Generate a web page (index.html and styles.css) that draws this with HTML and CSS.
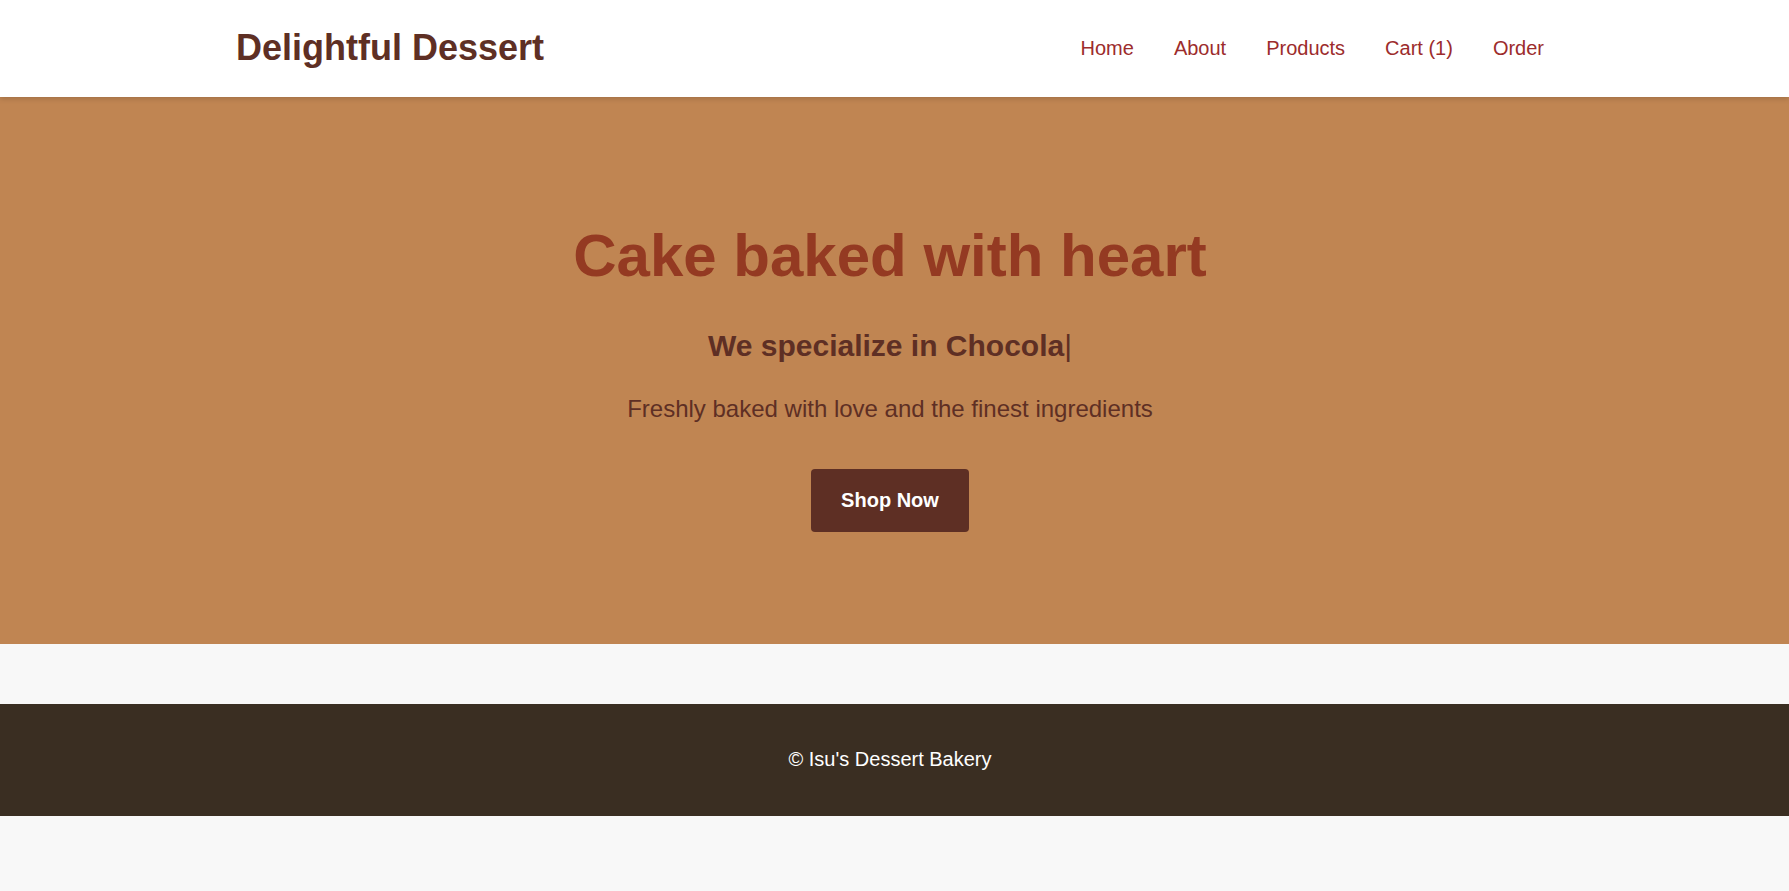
FILE: index.html
```html
<!DOCTYPE html>
<html lang="en">
<head>
<meta charset="utf-8">
<title>Delightful Dessert</title>
<link rel="stylesheet" href="styles.css">
</head>
<body>
<header class="site-header">
  <div class="header-inner">
    <h1 class="logo">Delightful Dessert</h1>
    <nav class="nav">
      <a href="#" class="nav-link">Home</a>
      <a href="#" class="nav-link">About</a>
      <a href="#" class="nav-link">Products</a>
      <a href="#" class="nav-link">Cart (1)</a>
      <a href="#" class="nav-link">Order</a>
    </nav>
  </div>
</header>
<section class="hero">
  <h2 class="hero-title">Cake baked with heart</h2>
  <h3 class="hero-sub">We specialize in Chocola<span class="cursor">|</span></h3>
  <p class="hero-text">Freshly baked with love and the finest ingredients</p>
  <a href="#" class="btn">Shop Now</a>
</section>
<footer class="site-footer">
  <p class="footer-text">© Isu's Dessert Bakery</p>
</footer>
</body>
</html>
```
FILE: styles.css
```css
* { box-sizing: border-box; }
html, body { margin: 0; padding: 0; }
body {
  font-family: "Liberation Sans", Arial, sans-serif;
  background: #f8f8f8;
  color: #333;
}
.site-header {
  background: #ffffff;
  box-shadow: 0 2px 5px rgba(0, 0, 0, 0.15);
  position: relative;
  z-index: 2;
  padding-right: 9px;
}
.header-inner {
  max-width: 1308px;
  margin: 0 auto;
  height: 97px;
  display: flex;
  align-items: center;
  justify-content: space-between;
}
.logo {
  margin: 0;
  padding-top: 1px;
  padding-bottom: 3px;
  font-size: 36px;
  font-weight: 700;
  color: #5e2f24;
}
.nav {
  display: flex;
  gap: 40px;
}
.nav-link {
  font-size: 20px;
  color: #9c2c2c;
  text-decoration: none;
}
.hero {
  background: #c08552;
  display: flex;
  flex-direction: column;
  align-items: center;
  text-align: center;
  padding: 124px 29px 112px 20px;
}
.hero-title {
  margin: 0 0 39px;
  font-size: 60px;
  font-weight: 700;
  color: #943a22;
}
.hero-sub {
  margin: 0 0 32px;
  font-size: 30px;
  font-weight: 700;
  color: #5e2f24;
}
.cursor {
  font-weight: 400;
}
.hero-text {
  margin: 0 0 46px;
  font-size: 24px;
  color: #5e2f24;
}
.btn {
  display: inline-block;
  padding: 20px 30px;
  font-size: 20px;
  font-weight: 700;
  color: #ffffff;
  background: #5e2f24;
  border-radius: 4px;
  text-decoration: none;
}
.site-footer {
  margin-top: 60px;
  background: #3a2e22;
  padding: 44px 29px 45px 20px;
  text-align: center;
}
.footer-text {
  margin: 0;
  font-size: 20px;
  color: #ffffff;
}
```
